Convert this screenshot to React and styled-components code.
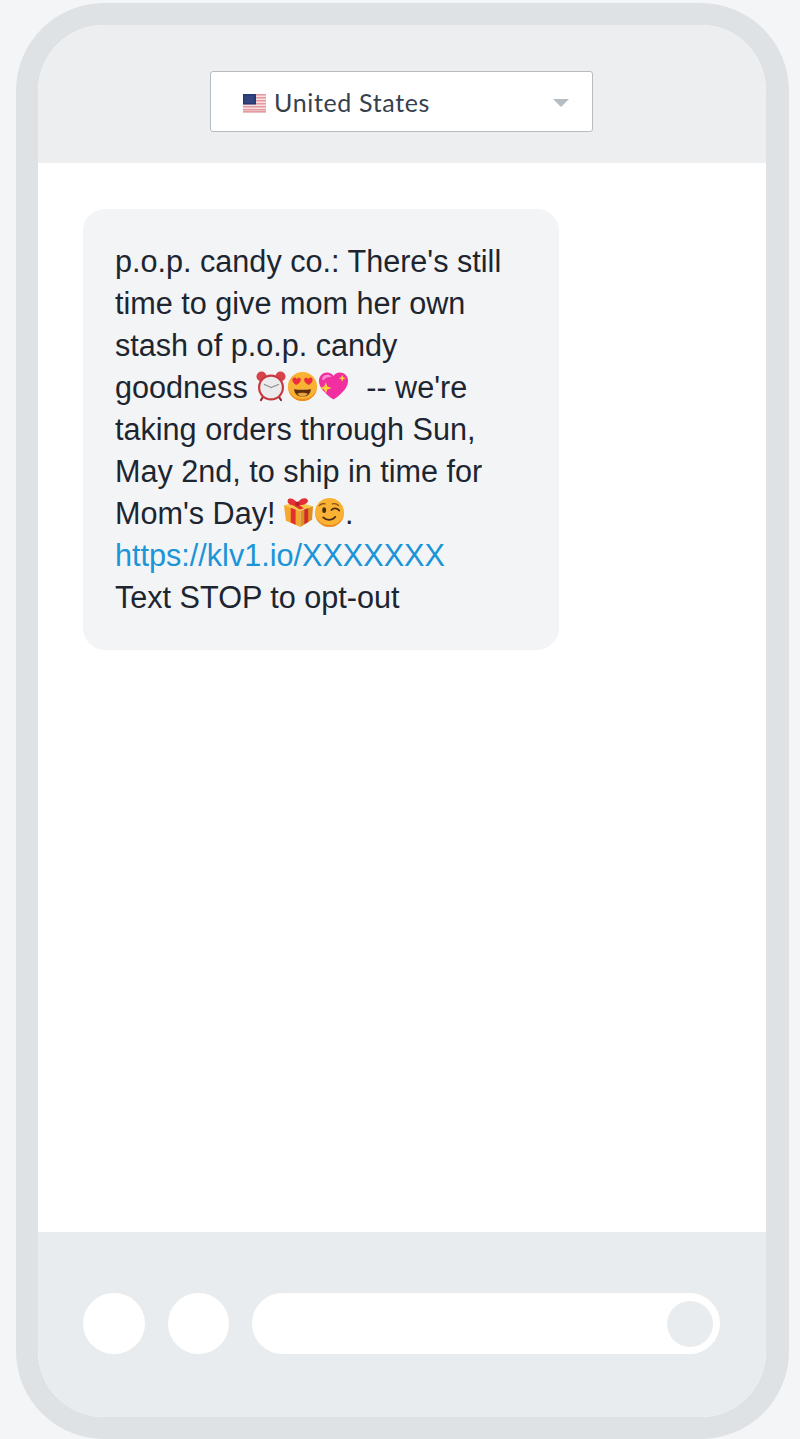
import React from "react";
import styled, { createGlobalStyle } from "styled-components";

const Global = createGlobalStyle`
  html, body { margin: 0; padding: 0; background: #f4f5f7; }
  #root { width: 800px; height: 1439px; overflow: hidden; }
`;

const Page = styled.div`
  box-sizing: border-box;
  width: 800px;
  height: 1439px;
  padding: 3px 11px 0 16px;
  background: #f4f5f7;
`;

const Phone = styled.div`
  box-sizing: border-box;
  width: 773px;
  height: 1436px;
  border: 22px solid #dfe2e5;
  border-right-width: 23px;
  border-radius: 88px;
  display: flex;
  flex-direction: column;
  overflow: hidden;
  background: #fff;
`;

const Header = styled.header`
  height: 138px;
  flex: none;
  background: #edeef0;
  display: flex;
  justify-content: center;
  padding: 45.5px 1px 0 0;
  box-sizing: border-box;
`;

const Select = styled.div`
  box-sizing: border-box;
  width: 383px;
  height: 61.5px;
  background: #fff;
  border: 1px solid #b5bcc2;
  border-radius: 3px;
  display: flex;
  align-items: center;
  padding: 4px 23px 0 32px;
  font-family: "Lato", "Open Sans", sans-serif;
  font-size: 25px;
  color: #35414d;
`;

const Label = styled.span`
  margin: -2px 0 0 8px;
  flex: 1;
  letter-spacing: 0.65px;
`;

const Flag = styled.svg`
  width: 23px;
  height: 19px;
  flex: none;
`;

const Caret = styled.span`
  width: 0;
  height: 0;
  border-left: 8px solid transparent;
  border-right: 8px solid transparent;
  border-top: 8px solid #b5bcc3;
`;

const Body = styled.main`
  flex: 1;
  background: #fff;
  padding: 46px 0 0 45px;
`;

const Bubble = styled.div`
  box-sizing: border-box;
  width: 476px;
  height: 441px;
  background: #f3f4f6;
  border-radius: 22px;
  padding: 30.5px 0 0 32px;
  font-family: "Liberation Sans", Arial, sans-serif;
  font-size: 30.6px;
  line-height: 42px;
  color: #1d2630;
  white-space: pre-wrap;
`;

const Link = styled.span`
  color: #1b95d8;
`;

const Emoji = styled.svg`
  display: inline-block;
  width: ${(p) => p.$w || 31}px;
  height: 32px;
  vertical-align: -4px;
  margin-left: ${(p) => p.$before || 0}px;
`;

const Footer = styled.footer`
  height: 185px;
  flex: none;
  box-sizing: border-box;
  background: #e9ecee;
  padding: 61px 46px 0 45px;
  display: flex;
  align-items: flex-start;
  gap: 23px;
`;

const Circle = styled.div`
  width: ${(p) => p.$size}px;
  height: 61px;
  flex: none;
  border-radius: 50%;
  background: #fff;
`;

const Input = styled.div`
  flex: 1;
  height: 61px;
  border-radius: 31px;
  background: #fff;
  display: flex;
  align-items: center;
  justify-content: flex-end;
  padding-right: 7px;
`;

const Send = styled.div`
  width: 46px;
  height: 46px;
  border-radius: 50%;
  background: #e9ecee;
`;

const Clock = () => (
  <Emoji viewBox="0 0 32 32" $w={32} $before={-1}>
    <circle cx="6.5" cy="6.5" r="5" fill="#d8434a" />
    <circle cx="25.5" cy="6.5" r="5" fill="#d8434a" />
    <path d="M6 30l3-4.500M26 30l-3-4.500" stroke="#8f2a33" strokeWidth="2.2" strokeLinecap="round" />
    <circle cx="16" cy="17.5" r="13" fill="#c9383f" />
    <circle cx="16" cy="17.5" r="10.800" fill="#ecebeb" />
    <path d="M16 17.500l-6.500-3M16 17.500l7.500-3" stroke="#8a8d93" strokeWidth="1.300" strokeLinecap="round" />
  </Emoji>
);

const HeartEyes = () => (
  <Emoji viewBox="0 0 32 32">
    <circle cx="16" cy="16.500" r="15" fill="#f9b233" />
    <path d="M1 16.500a15 15 0 0 0 30 0c-1 8-7 13-15 13S2 24.500 1 16.500z" fill="#ee8a1f" />
    <path d="M9.500 15C5 12 4.500 8.500 7 7.500c1.400-.5 2.500.3 3 1.500.6-1.200 1.800-1.800 3.100-1.200 2.300 1.200 1.500 4.700-3.600 7.200z" fill="#ea2e3d" />
    <path d="M22.500 15c-5.100-2.500-5.900-6-3.600-7.200 1.300-.6 2.500 0 3.100 1.200.5-1.200 1.600-2 3-1.500 2.500 1 2 4.500-2.500 7.500z" fill="#ea2e3d" />
    <path d="M7.500 19c5 1.300 12 1.300 17 0 .4 4.500-3.500 8-8.500 8s-8.900-3.500-8.500-8z" fill="#5b2c12" />
    <path d="M10.500 24c3-1.500 8-1.500 11 0-1.500 2-3.500 3-5.500 3s-4-1-5.500-3z" fill="#e9a13b" />
  </Emoji>
);

const SparkHeart = () => (
  <Emoji viewBox="0 0 32 32">
    <path d="M16 30C6 23 1 17 1 10.500 1 5.500 5 2 9.500 2c3 0 5.200 1.400 6.500 3.800C17.300 3.400 19.500 2 22.500 2 27 2 31 5.500 31 10.500 31 17 26 23 16 30z" fill="#f22fa0" />
    <path d="M4 9c.5-3 3-4.500 6-4.500 2 0 3.500 1 4 2.500-3-1-6 0-8 3z" fill="#fb8fcb" />
    <path d="M8 12l1.600 4.400L14 18l-4.400 1.600L8 24l-1.600-4.400L2 18l4.400-1.600z" fill="#fbd03a" />
    <path d="M25 4.500l1 2.500 2.500 1-2.500 1-1 2.500-1-2.500-2.500-1 2.500-1z" fill="#fbd03a" />
  </Emoji>
);

const Gift = () => (
  <Emoji viewBox="0 0 32 32" $before={-1}>
    <path d="M1 9l15-3 15 4-13 5z" fill="#f7c648" />
    <path d="M1 9l17 6v16.500L3 25z" fill="#f2ab2e" />
    <path d="M18 15l13-5-1 14-12 7.500z" fill="#dd8f1f" />
    <path d="M8 11.500l5 1.800v15.900l-5-2.400z" fill="#e2302f" />
    <path d="M22 13.500l4-1.500v14.300l-4 2.400z" fill="#d22a2c" />
    <path d="M13.500 6.500l8 5.500-4 1.500-8-5z" fill="#e2302f" />
    <path d="M15 8.500C9 10 3.500 7.500 5 3.500 6.200.5 12 2 15 7c2-5 8.500-7 10.500-3.500 1.500 3.200-4.500 6-10.500 5z" fill="#e32f35" />
    <circle cx="15" cy="7.500" r="2.400" fill="#b81f27" />
  </Emoji>
);

const Wink = () => (
  <Emoji viewBox="0 0 32 32">
    <circle cx="16" cy="16.500" r="15" fill="#f9b233" />
    <path d="M1 16.500a15 15 0 0 0 30 0c-1 8-7 13-15 13S2 24.500 1 16.500z" fill="#ee8a1f" />
    <ellipse cx="10.500" cy="14" rx="2" ry="3" fill="#4b2a12" />
    <path d="M18 14c2-2.500 6-2.500 8 .5" stroke="#4b2a12" strokeWidth="1.800" fill="none" strokeLinecap="round" />
    <path d="M5.500 9.500c1.500-2 4-2.500 6-2M19 7.500c2.500-.5 5 .3 6.500 2" stroke="#8a5116" strokeWidth="1.300" fill="none" strokeLinecap="round" />
    <path d="M9.500 21.500c3.500 3.500 9.500 3.500 12.500-.5" stroke="#4b2a12" strokeWidth="1.800" fill="none" strokeLinecap="round" />
  </Emoji>
);

export default function App() {
  return (
    <>
      <Global />
      <Page>
        <Phone>
          <Header>
            <Select>
              <Flag viewBox="0 0 23 19">
                <rect width="23" height="19" fill="#f6dfe0" />
                {[0, 3, 6, 9, 12, 15, 17].map((y) => (
                  <rect key={y} y={y} width="23" height="1.500" fill="#e39a9f" />
                ))}
                <rect width="13" height="10.500" fill="#27386f" />
                <rect x="1.500" y="1.500" width="10" height="7.500" fill="#32457f" />
              </Flag>
              <Label>United States</Label>
              <Caret />
            </Select>
          </Header>
          <Body>
            <Bubble>
              p.o.p. candy co.: There's still{"\n"}
              time to give mom her own{"\n"}
              stash of p.o.p. candy{"\n"}
              goodness <Clock /><HeartEyes /><SparkHeart />{"  -- we're\n"}
              taking orders through Sun,{"\n"}
              May 2nd, to ship in time for{"\n"}
              Mom's Day! <Gift /><Wink />.{"\n"}
              <Link>https://klv1.io/XXXXXXX</Link>{"\n"}
              Text STOP to opt-out
            </Bubble>
          </Body>
          <Footer>
            <Circle $size={62} />
            <Circle $size={61} />
            <Input>
              <Send />
            </Input>
          </Footer>
        </Phone>
      </Page>
    </>
  );
}
